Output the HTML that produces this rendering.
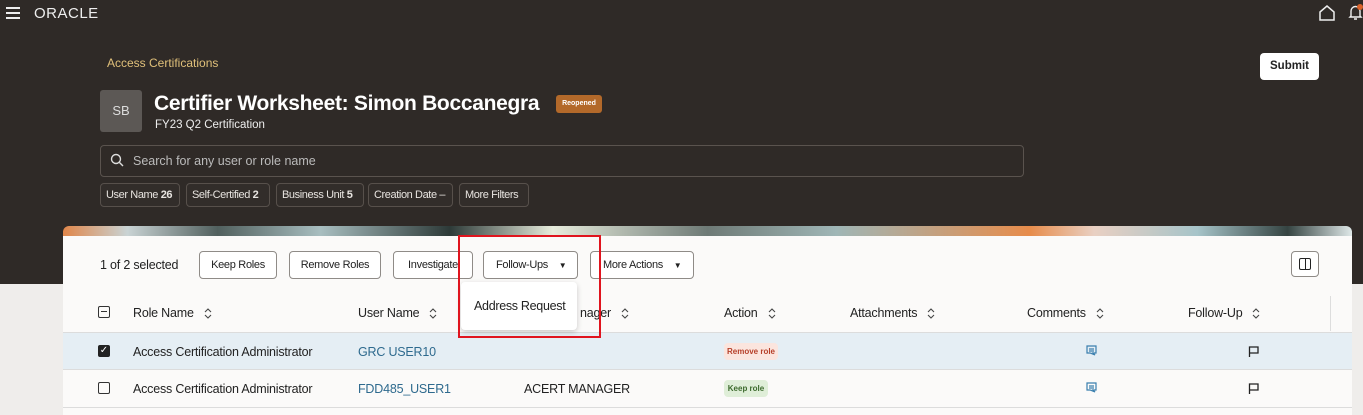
<!DOCTYPE html>
<html><head><meta charset="utf-8"><style>
*{box-sizing:border-box;margin:0;padding:0}
body{width:1363px;height:415px;overflow:hidden;background:#efedeb;font-family:"Liberation Sans",sans-serif;position:relative}
.dark{position:absolute;left:0;top:0;width:1363px;height:284px;background:#2f2a27}
.a{position:absolute;white-space:nowrap}
.chip{position:absolute;top:183px;height:24px;border:1px solid #57504b;border-radius:4px;color:#e8e4e0;font-size:11px;letter-spacing:-0.4px;line-height:22px;padding:0 5px;background:#322d2a;white-space:nowrap;overflow:hidden}
.btn{position:absolute;top:251px;height:28px;border:1px solid #8f8b87;border-radius:4px;background:#fff;font-size:11px;letter-spacing:-0.3px;line-height:26px;text-align:center;color:#222;white-space:nowrap}
.th{position:absolute;top:306px;font-size:12.5px;color:#222;white-space:nowrap;letter-spacing:-0.2px}
.td{position:absolute;font-size:12.5px;color:#222;white-space:nowrap;letter-spacing:-0.2px}
.sort{display:inline-block;vertical-align:middle;margin-left:10px}
</style></head><body>
<div class="dark"></div>
<div class="a" style="left:6px;top:7px;width:14px;height:2px;background:#eee;box-shadow:0 5px 0 #eee,0 10px 0 #eee"></div>
<div class="a" style="left:34px;top:5px;color:#eee;font-size:15px;letter-spacing:0.5px">ORACLE</div>
<svg class="a" style="left:1318px;top:5px" width="18" height="16" viewBox="0 0 18 16"><path d="M2 7 L9 1 L16 7 V15 H2 Z" fill="none" stroke="#eee" stroke-width="1.5"/></svg>
<svg class="a" style="left:1348px;top:4px" width="15" height="17" viewBox="0 0 15 17"><path d="M3 12 V7 a4.5 4.5 0 0 1 9 0 V12 L13 13 H2 Z M6 15 h3" fill="none" stroke="#eee" stroke-width="1.4"/><circle cx="12" cy="3" r="3" fill="#d9622b"/></svg>
<div class="a" style="left:107px;top:56px;color:#e0c07a;font-size:12px">Access Certifications</div>
<div class="a" style="left:1260px;top:53px;width:59px;height:27px;background:#fff;border-radius:4px;font-size:11.5px;font-weight:bold;line-height:27px;text-align:center;color:#222">Submit</div>
<div class="a" style="left:100px;top:90px;width:42px;height:42px;background:#5c5855;border-radius:3px;color:#ddd;font-size:13px;line-height:42px;text-align:center">SB</div>
<div class="a" style="left:154px;top:92px;color:#fff;font-size:21px;font-weight:bold;letter-spacing:-0.3px">Certifier Worksheet: Simon Boccanegra</div>
<div class="a" style="left:556px;top:95px;width:46px;height:18px;background:#b3692a;border-radius:3px;color:#fff;font-size:7px;line-height:18px;text-align:center;font-weight:bold">Reopened</div>
<div class="a" style="left:155px;top:119px;color:#eee;font-size:11.5px">FY23 Q2 Certification</div>
<div class="a" style="left:100px;top:145px;width:924px;height:32px;border:1px solid #5a534e;border-radius:4px"></div>
<svg class="a" style="left:110px;top:153px" width="14" height="14" viewBox="0 0 14 14"><circle cx="6" cy="6" r="4.5" fill="none" stroke="#ddd" stroke-width="1.4"/><path d="M9.5 9.5 L13 13" stroke="#ddd" stroke-width="1.4"/></svg>
<div class="a" style="left:133px;top:154px;color:#bbb;font-size:12.5px">Search for any user or role name</div>
<div class="chip" style="left:100px;width:80px">User Name <b>26</b></div>
<div class="chip" style="left:186px;width:84px">Self-Certified <b>2</b></div>
<div class="chip" style="left:276px;width:88px">Business Unit <b>5</b></div>
<div class="chip" style="left:368px;width:85px">Creation Date –</div>
<div class="chip" style="left:459px;width:70px">More Filters</div>
<div class="a" style="left:63px;top:226px;width:1289px;height:12px;border-radius:6px 6px 0 0;background:linear-gradient(90deg,#e0864a 0%,#c9d3d4 5%,#51605e 12%,#a8bec0 20%,#2d3a38 30%,#e7ecdc 38%,#6e7a76 50%,#9fb6b6 60%,#e78c4b 75%,#e9d0c3 80%,#a6c4c9 88%,#354442 95%,#dfe8e8 100%)"></div>
<div class="a" style="left:63px;top:236px;width:1289px;height:179px;background:#fbfaf9"></div>
<div class="a" style="left:1330px;top:296px;width:1px;height:35px;background:#ddd"></div>
<div class="a" style="left:100px;top:258px;font-size:12.5px;color:#222;letter-spacing:-0.2px">1 of 2 selected</div>
<div class="btn" style="left:199px;width:78px">Keep Roles</div>
<div class="btn" style="left:289px;width:92px">Remove Roles</div>
<div class="btn" style="left:393px;width:80px">Investigate</div>
<div class="btn" style="left:483px;width:95px;text-align:left;padding-left:12px">Follow-Ups <span style="font-size:8px;margin-left:8px">▼</span></div>
<div class="btn" style="left:590px;width:104px;text-align:left;padding-left:12px">More Actions <span style="font-size:8px;margin-left:8px">▼</span></div>
<div class="a" style="left:1291px;top:251px;width:28px;height:26px;border:1px solid #8f8b87;border-radius:4px;background:#fff"><div style="position:absolute;left:7px;top:6px;width:12px;height:12px;border:1.5px solid #222;border-radius:2px"></div><div style="position:absolute;left:12.5px;top:6px;width:1.5px;height:12px;background:#222"></div></div>
<div class="a" style="left:98px;top:306px;width:12px;height:12px;border:1.5px solid #333;border-radius:2px"><div style="margin:3.5px 2px;height:1.5px;background:#333"></div></div>
<div class="th" style="left:133px">Role Name<svg class="sort" width="8" height="11" viewBox="0 0 8 11"><path d="M1 4 L4 1 L7 4 M1 7 L4 10 L7 7" fill="none" stroke="#444" stroke-width="1.1"/></svg></div>
<div class="th" style="left:358px">User Name<svg class="sort" width="8" height="11" viewBox="0 0 8 11"><path d="M1 4 L4 1 L7 4 M1 7 L4 10 L7 7" fill="none" stroke="#444" stroke-width="1.1"/></svg></div>
<div class="th" style="left:580px">nager<svg class="sort" width="8" height="11" viewBox="0 0 8 11"><path d="M1 4 L4 1 L7 4 M1 7 L4 10 L7 7" fill="none" stroke="#444" stroke-width="1.1"/></svg></div>
<div class="th" style="left:724px">Action<svg class="sort" width="8" height="11" viewBox="0 0 8 11"><path d="M1 4 L4 1 L7 4 M1 7 L4 10 L7 7" fill="none" stroke="#444" stroke-width="1.1"/></svg></div>
<div class="th" style="left:850px">Attachments<svg class="sort" width="8" height="11" viewBox="0 0 8 11"><path d="M1 4 L4 1 L7 4 M1 7 L4 10 L7 7" fill="none" stroke="#444" stroke-width="1.1"/></svg></div>
<div class="th" style="left:1027px">Comments<svg class="sort" width="8" height="11" viewBox="0 0 8 11"><path d="M1 4 L4 1 L7 4 M1 7 L4 10 L7 7" fill="none" stroke="#444" stroke-width="1.1"/></svg></div>
<div class="th" style="left:1188px">Follow-Up<svg class="sort" width="8" height="11" viewBox="0 0 8 11"><path d="M1 4 L4 1 L7 4 M1 7 L4 10 L7 7" fill="none" stroke="#444" stroke-width="1.1"/></svg></div>
<div class="a" style="left:63px;top:332px;width:1289px;height:38px;background:#e5eef4;border-top:1px solid #dcdcdc;border-bottom:1px solid #dcdcdc"></div>
<div class="a" style="left:63px;top:407px;width:1289px;height:1px;background:#dcdcdc"></div>
<div class="a" style="left:98px;top:345px;width:12px;height:12px;background:#222;border-radius:2px;color:#fff;font-size:10px;line-height:12px;text-align:center">✓</div>
<div class="a" style="left:98px;top:382px;width:12px;height:12px;border:1.5px solid #333;border-radius:2px"></div>
<div class="td" style="left:133px;top:345px">Access Certification Administrator</div>
<div class="td" style="left:133px;top:382px">Access Certification Administrator</div>
<div class="td" style="left:358px;top:345px;color:#2e6a8e">GRC USER10</div>
<div class="td" style="left:358px;top:382px;color:#2e6a8e">FDD485_USER1</div>
<div class="td" style="left:524px;top:382px">ACERT MANAGER</div>
<div class="a" style="left:724px;top:343px;width:54px;height:17px;background:#fbe5de;border-radius:4px;color:#b6402a;font-size:8px;line-height:17px;text-align:center;font-weight:bold">Remove role</div>
<div class="a" style="left:724px;top:380px;width:44px;height:17px;background:#dfeed8;border-radius:4px;color:#3d6b2d;font-size:8px;line-height:17px;text-align:center;font-weight:bold">Keep role</div>
<svg class="a" style="left:1086px;top:345px" width="11" height="11" viewBox="0 0 11 11"><path d="M1 1 H10 V8 H7 L9 10 L4 8 H1 Z M3 4 H8 M3 6 H8" fill="none" stroke="#3a7fae" stroke-width="1.2"/></svg>
<svg class="a" style="left:1086px;top:382px" width="11" height="11" viewBox="0 0 11 11"><path d="M1 1 H10 V8 H7 L9 10 L4 8 H1 Z M3 4 H8 M3 6 H8" fill="none" stroke="#3a7fae" stroke-width="1.2"/></svg>
<svg class="a" style="left:1248px;top:346px" width="11" height="11" viewBox="0 0 11 11"><path d="M1.5 11 V1 H10 V7 H1.5" fill="none" stroke="#222" stroke-width="1.3"/></svg>
<svg class="a" style="left:1248px;top:383px" width="11" height="11" viewBox="0 0 11 11"><path d="M1.5 11 V1 H10 V7 H1.5" fill="none" stroke="#222" stroke-width="1.3"/></svg>
<div class="a" style="left:461px;top:282px;width:116px;height:48px;background:#fff;border-radius:4px;box-shadow:0 2px 6px rgba(0,0,0,0.2)"></div>
<div class="a" style="left:474px;top:299px;font-size:12.5px;color:#222;letter-spacing:-0.3px">Address Request</div>
<div class="a" style="left:458px;top:235px;width:143px;height:103px;border:2px solid #e0141e"></div>
</body></html>
